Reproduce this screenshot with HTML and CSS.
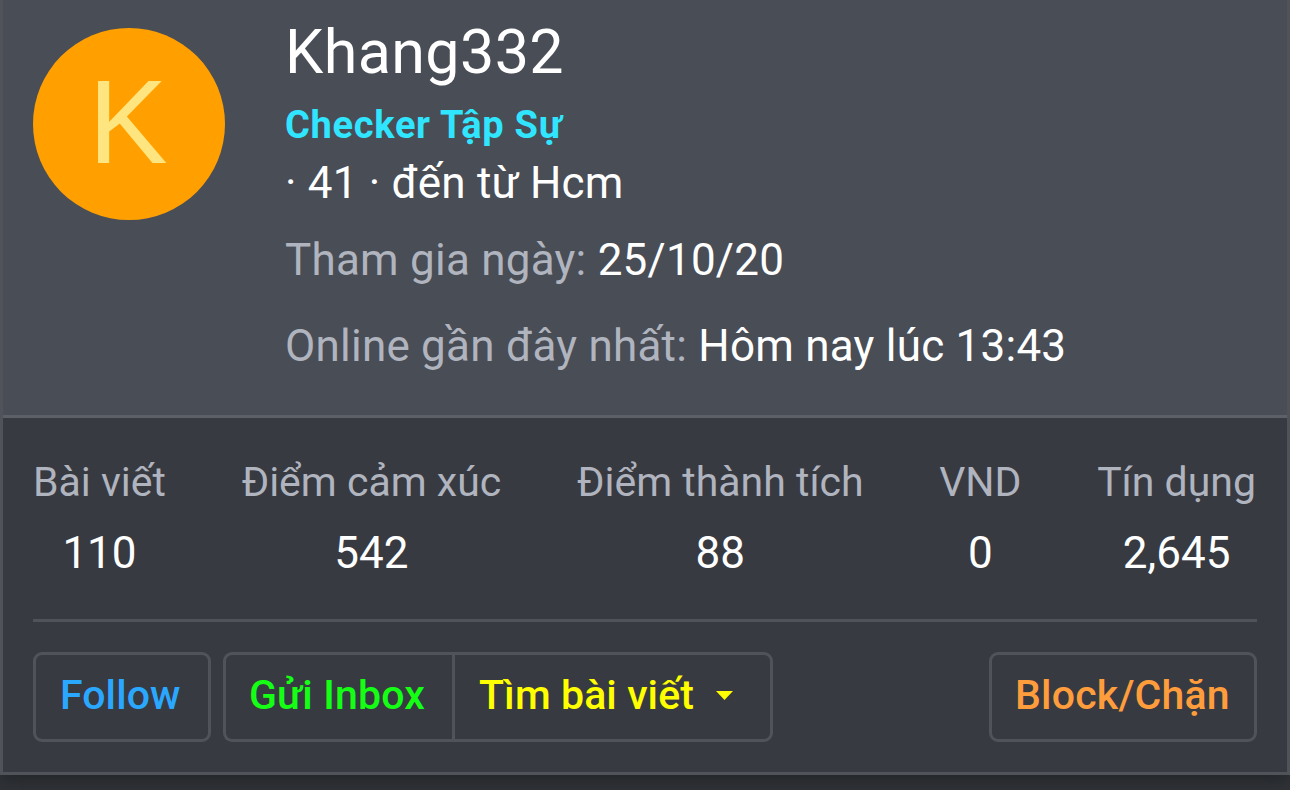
FILE: index.html
```html
<!DOCTYPE html>
<html lang="vi">
<head>
<meta charset="utf-8">
<title>Khang332</title>
<link rel="stylesheet" href="styles.css">
</head>
<body>
<article class="card">
  <header class="profile">
    <div class="avatar"><span class="letter">K</span></div>
    <div class="info">
      <h1 class="name">Khang332</h1>
      <div class="rank">Checker Tập Sự</div>
      <div class="blurb">· 41 · đến từ Hcm</div>
      <div class="joined"><span class="label">Tham gia ngày:</span> <span>25/10/20</span></div>
      <div class="seen"><span class="label">Online gần đây nhất:</span> <span>Hôm nay lúc 13:43</span></div>
    </div>
  </header>
  <section class="body">
    <div class="stats">
      <dl><dt>Bài viết</dt><dd>110</dd></dl>
      <dl><dt>Điểm cảm xúc</dt><dd>542</dd></dl>
      <dl><dt>Điểm thành tích</dt><dd>88</dd></dl>
      <dl><dt>VND</dt><dd>0</dd></dl>
      <dl><dt>Tín dụng</dt><dd>2,645</dd></dl>
    </div>
    <hr class="rule">
    <div class="actions">
      <a class="btn follow">Follow</a>
      <div class="group">
        <a class="btn inbox">Gửi Inbox</a>
        <a class="btn find">Tìm bài viết<svg class="caret" width="17" height="9" viewBox="0 0 17 9"><path d="M0 0h17L8.500 9z" fill="currentColor"/></svg></a>
      </div>
      <a class="btn block">Block/Chặn</a>
    </div>
  </section>
</article>
</body>
</html>
```
FILE: styles.css
```css
* { box-sizing: border-box; margin: 0; padding: 0; }
body { background: #313338; font-family: Roboto, sans-serif; color: #fff; overflow: hidden; height: 790px; }
.card { height: 775px; border: 3px solid #505359; border-top: 0; background: #383a42; box-shadow: 0 6px 18px rgba(20,25,25,.5); white-space: nowrap; }
.profile { height: 418px; background: #494d56; border-bottom: 3px solid #5d6067; display: flex; padding: 28px 30px 0; }
.avatar { width: 192px; height: 192px; border-radius: 50%; background: #ffa000; color: #ffe57f; display: flex; align-items: center; justify-content: center; font: 119px/192px "Liberation Sans", sans-serif; }
.letter { margin: -5px 0 0 -2px; }
.info { margin-left: 60px; margin-top: -28px; font-size: 44px; letter-spacing: 0.23px; }
.name { font-weight: 400; font-size: 61px; line-height: 72px; padding-top: 16px; height: 100px; letter-spacing: 0.4px; }
.rank { font-weight: 700; font-size: 38px; line-height: 50px; color: #30e5ff; letter-spacing: 0.7px; }
.blurb { line-height: 66px; height: 72px; letter-spacing: 0.17px; }
.joined { line-height: 76px; height: 86px; }
.seen { line-height: 76px; }
.label { color: #b0b4be; }
.body { padding: 0 30px; }
.stats { height: 201px; padding: 37px 1px 0 0; display: flex; justify-content: space-between; text-align: center; }
.stats dt { font-size: 41px; line-height: 54px; color: #b0b4be; }
.stats dd { font-size: 44px; line-height: 56px; margin-top: 16px; }
.rule { height: 3px; border: 0; background: #505359; }
.actions { display: flex; margin-top: 30px; }
.btn { display: flex; align-items: center; height: 90px; border: 3px solid #505359; border-radius: 9px; font-size: 41px; font-weight: 500; padding: 0 0 4px 24px; letter-spacing: 0.1px; }
.follow { width: 178px; color: #2aa8ff; padding-left: 24px; letter-spacing: 0.1px; }
.group { display: flex; margin-left: 12px; }
.inbox { width: 229px; color: #14ff14; border-radius: 9px 0 0 9px; border-right: 0; padding-left: 23px; letter-spacing: 0.15px; }
.find { width: 321px; color: #ff0; border-radius: 0 9px 9px 0; }
.caret { margin: 1px 0 0 22px; }
.block { width: 268px; margin-left: auto; color: #ff9d3c; padding-left: 23px; letter-spacing: 0.2px; }
```
